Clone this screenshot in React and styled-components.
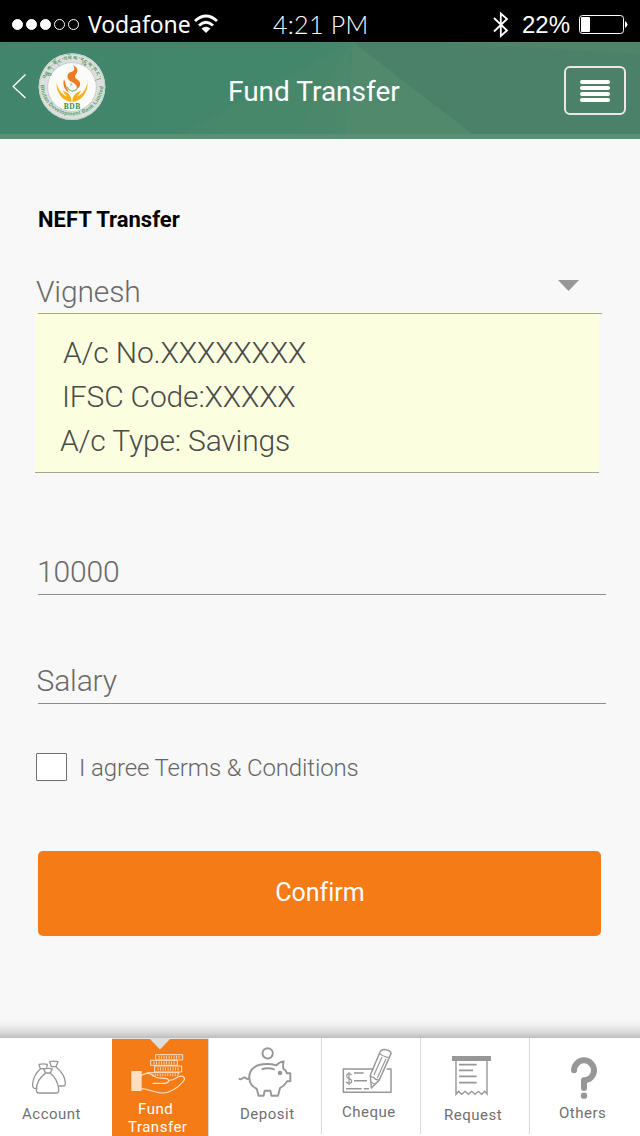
import React from "react";
import styled, { createGlobalStyle } from "styled-components";

const GlobalStyle = createGlobalStyle`
  * { box-sizing: border-box; }
  body { margin: 0; background: #f8f8f8; }
`;

const Screen = styled.div`
  width: 640px;
  height: 1136px;
  display: flex;
  flex-direction: column;
  background: #f8f8f8;
  font-family: Roboto, "Noto Sans", sans-serif;
  font-variant-ligatures: none;
  overflow: hidden;
`;

/* ---------- status bar ---------- */

const StatusBar = styled.div`
  height: 42px;
  flex: none;
  display: flex;
  align-items: flex-start;
  background: #000;
  color: #fff;
  padding-left: 12px;
`;

const SignalDots = styled.div`
  display: flex;
  gap: 3px;
  margin-top: 19px;
`;

const Dot = styled.span`
  width: 11px;
  height: 11px;
  border-radius: 50%;
  border: 1px solid #fff;
  background: ${(p) => (p.$on ? "#fff" : "transparent")};
`;

const StatusText = styled.span`
  font-family: ${(p) => p.$font}, sans-serif;
  font-size: ${(p) => p.$size}px;
  font-weight: ${(p) => p.$weight || 400};
  line-height: 30px;
  letter-spacing: ${(p) => p.$track || 0}px;
  margin-top: ${(p) => p.$top}px;
  margin-left: ${(p) => p.$gap}px;
  width: ${(p) => p.$width}px;
  white-space: nowrap;
`;

const StatusIcon = styled.svg`
  display: block;
  flex: none;
  margin-top: ${(p) => p.$top}px;
  margin-left: ${(p) => p.$gap || 0}px;
`;

/* ---------- header ---------- */

const Header = styled.header`
  position: relative;
  height: 97px;
  flex: none;
  display: flex;
  align-items: flex-start;
  padding-left: 12px;
  color: #fff;
`;

const HeaderPattern = styled.svg`
  position: absolute;
  inset: 0;
`;

const BackButton = styled.button`
  position: relative;
  margin: 31px 0 0;
  padding: 0;
  border: 0;
  background: none;
  display: flex;
`;

const LogoMark = styled.svg`
  position: relative;
  display: block;
  margin: 11px 0 0 11px;
`;

const Title = styled.h1`
  position: relative;
  margin: 33px 0 0 122px;
  width: 336px;
  font-size: 28px;
  font-weight: 400;
  line-height: 34px;
`;

const MenuButton = styled.button`
  position: relative;
  margin: 24px 0 0;
  width: 62px;
  height: 49px;
  padding: 0;
  border: 2px solid #ebe6e7;
  border-radius: 6px;
  background: none;
  display: flex;
  flex-direction: column;
  align-items: center;
  justify-content: center;
  gap: 2px;
`;

const MenuBar = styled.span`
  width: 30px;
  height: 4px;
  border-radius: 2px;
  background: #fff;
`;

/* ---------- form ---------- */

const Form = styled.main`
  flex: 1;
  padding: 68px 0 0 35px;
  display: flex;
  flex-direction: column;
  align-items: flex-start;
`;

const SectionTitle = styled.h2`
  margin: 0 0 41px 3px;
  font-size: 22px;
  font-weight: 700;
  line-height: 26px;
  color: #000;
`;

const Field = styled.div`
  position: relative;
  z-index: 1;
  flex: none;
  width: ${(p) => p.$width}px;
  height: ${(p) => p.$height}px;
  margin: ${(p) => p.$top || 0}px 0 0 3px;
  border-bottom: 1px solid ${(p) => p.$line || "#8d8d8d"};
  display: flex;
  justify-content: space-between;
  font-size: 30px;
  font-weight: 300;
  line-height: 36px;
  letter-spacing: -0.15px;
  color: #6a6a6a;
  text-indent: ${(p) => p.$indent || 0}px;
`;

const Caret = styled.svg`
  margin: 6px 23px 0 0;
`;

const AccountBox = styled.div`
  flex: none;
  width: 564px;
  height: 161px;
  margin-top: -2px;
  padding-top: 19px;
  background: #fbffdf;
  border-bottom: 1px solid #a3a68c;
`;

const AccountLine = styled.div`
  padding-left: ${(p) => p.$left}px;
  font-size: 30px;
  font-weight: 300;
  line-height: 44px;
  letter-spacing: -0.17px;
  color: #4a4a4a;
`;

const TermsRow = styled.label`
  display: flex;
  align-items: center;
  height: 28px;
  margin: 49px 0 0 1px;
  font-size: 24px;
  font-weight: 300;
  line-height: 28px;
  letter-spacing: -0.13px;
  color: #666;
`;

const Checkbox = styled.span`
  width: 31px;
  height: 28px;
  margin-right: 12px;
  border: 1px solid #6f6f6f;
  border-radius: 1px;
  background: #fff;
`;

const TermsText = styled.span`
  padding-top: 1px;
`;

const ConfirmButton = styled.button`
  flex: none;
  width: 563px;
  height: 85px;
  margin: 70px 0 0 3px;
  padding: 0 0 1px 1px;
  border: 0;
  border-radius: 5px;
  background: #f57b17;
  color: #fff;
  font: 400 25px/30px Roboto, sans-serif;
  font-variant-ligatures: none;
`;

/* ---------- bottom tabs ---------- */

const TabShadow = styled.div`
  height: 18px;
  flex: none;
  background: linear-gradient(#f8f8f8, #ececec 35%, #d8d8d8 70%, #bdbdbd);
`;

const TabBar = styled.nav`
  height: 98px;
  flex: none;
  display: flex;
  background: #fff;
`;

const Tab = styled.a`
  position: relative;
  flex: none;
  width: ${(p) => p.$width}px;
  height: ${(p) => (p.$active ? 98 : 96)}px;
  padding-top: ${(p) => p.$top}px;
  border-right: ${(p) => (p.$divider ? "1px solid #d9d9d9" : "0")};
  border-top: ${(p) => (p.$active ? "1px solid #e4e4e4" : "0")};
  background: ${(p) => (p.$active ? "#f57b17" : "#fff")};
  color: ${(p) => (p.$active ? "#fff" : "#707070")};
`;

const TabIcon = styled.svg`
  display: block;
  margin-left: ${(p) => p.$left}px;
  fill: none;
  stroke: ${(p) => p.$color || "#979797"};
`;

const TabLabel = styled.div`
  margin: ${(p) => p.$gap}px 0 0 ${(p) => p.$left}px;
  font-size: 15px;
  letter-spacing: 0.5px;
  line-height: 18px;
  white-space: nowrap;
`;

const ActiveNotch = styled.svg`
  position: absolute;
  left: 37px;
  top: -1px;
`;

function Logo() {
  return (
    <LogoMark width="68" height="68" viewBox="0 0 68 68">
      <defs>
        <path id="ringTop" d="M7.500 33.700 A26.500 26.500 0 0 1 60.500 33.700" />
        <path id="ringBottom" d="M2.600 31 A31.400 31.400 0 0 0 65.400 31" />
      </defs>
      <circle cx="34" cy="33.7" r="33.4" fill="#dcdfde" />
      <circle cx="34" cy="33.7" r="32.8" fill="none" stroke="#bfd3c6" strokeWidth="1" />
      <circle cx="34" cy="34" r="24.4" fill="#fbfbf9" stroke="#c9cbd6" strokeWidth="1" />
      <text fontFamily="Noto Sans, sans-serif" fontSize="5.5" fontWeight="700" fill="#4d9b60">
        <textPath href="#ringTop" startOffset="50%" textAnchor="middle" textLength="68">
          འབྲུག་གོང་འཕེལ་དངུལ་ཁང་།
        </textPath>
      </text>
      <text fontFamily="Liberation Sans, sans-serif" fontSize="5.4" fontWeight="700" fill="#5aa36b">
        <textPath href="#ringBottom" startOffset="1" textLength="95">
          Bhutan Development Bank Limited
        </textPath>
      </text>
      <path d="M35 12 C41 15 40 19 37.5 22 C36 24 38 26 40 27 C44 30 42 35 38.5 36 C40 32 36 30 32 28 C28 25 29 20 33 19 C37 18 37 15 35 12Z" fill="#ee7b22" />
      <path d="M26 26 C24.500 31 26 37 31 39.500 C28.500 36 28 31 26 26Z" fill="#ee7b22" />
      <path d="M29 34 Q33 41 39 36" fill="none" stroke="#7dbb83" strokeWidth="1.200" />
      <path d="M33 29 L34.500 32 L32 33Z" fill="#a9cfae" />
      <path d="M18.500 29.500 C18 39 24 48 33.500 49 C34 42 29 39 24.500 37.500 C26 40 28 42 29 43.500 C23 41 20 36 18.500 29.500Z" fill="#f6ae1c" />
      <path d="M49.500 29.500 C50 39 44 48 34.500 49 C34 42 39 39 43.500 37.500 C42 40 40 42 39 43.500 C45 41 48 36 49.500 29.500Z" fill="#f6ae1c" />
      <text x="34.300" y="56" textAnchor="middle" fontFamily="Liberation Serif, serif" fontSize="7.500" fontWeight="700" letterSpacing="0.600" fill="#2f9150">BDB</text>
    </LogoMark>
  );
}

function AccountIcon() {
  return (
    <TabIcon $left={32} width="35" height="35" viewBox="96 121 105 105" strokeWidth="4" strokeLinejoin="round">
      <path d="M112 206 H103 Q97 205 98 192 Q101 165 121 148 L117 134 Q130 131 142 134 L140 144" />
      <path d="M121 147 H132" />
      <path d="M154 141 L149 126 Q162 123 174 126 L168 141 M152 141 H170 M168 142 Q194 163 196 188 Q197 199 190 199 H175" />
      <path d="M136 159 L131 148 Q144 144 157 148 L151 159 M133 160 H154 M136 161 Q109 180 109 211 Q109 220 116 220 H169 Q177 220 176 209 Q173 178 151 161" />
    </TabIcon>
  );
}

function FundIcon() {
  return (
    <TabIcon $left={19} $color="#fde0c4" width="55" height="42" viewBox="392 102 165 126" strokeWidth="3.500" strokeLinejoin="round" strokeLinecap="round">
      <rect x="393" y="156" width="31" height="60" fill="#fde0c4" stroke="none" />
      <rect x="467" y="107" width="80" height="16" strokeWidth="3" />
      <rect x="452" y="124" width="79" height="15" strokeWidth="3" />
      <rect x="464" y="141" width="80" height="18" strokeWidth="3" />
      <path d="M440 161 H536 L531 171" strokeWidth="3" />
      <path d="M475 115 H541 M460 132 H524 M472 150 H538" strokeWidth="9" strokeDasharray="2.500 5" strokeLinecap="butt" />
      <path d="M456 168 H526" strokeWidth="8" strokeDasharray="2.500 5" strokeLinecap="butt" />
      <path d="M424 169 C438 160 450 162 460 171 C466 176 478 178 494 178 Q506 179 505 186 Q503 193 492 193 H458 M505 184 Q518 184 528 177 Q540 168 550 174 Q556 179 548 188 C530 209 510 221 488 222 C466 223 450 211 424 209" />
    </TabIcon>
  );
}

function PiggyIcon() {
  return (
    <TabIcon $left={29} width="54" height="50" viewBox="98 79 162 150" strokeWidth="5.800" strokeLinejoin="round">
      <circle cx="187" cy="98" r="15.500" />
      <path d="M101 173 Q105 178 110 174 Q117 167 123 173 Q127 177 132 172" />
      <path d="M132 172 C130 144 154 130 184 130 Q202 130 213 134 Q221 124 235 122 Q232 134 234 144 Q242 149 245 158 H255 V182 H245 Q238 195 224 202 L218 225 H198 L195 210 H178 L175 225 H160 L154 204 Q133 195 132 172Z" />
      <path d="M169 146 Q188 139 208 147" />
      <circle cx="224" cy="157" r="7" fill="#979797" stroke="none" />
    </TabIcon>
  );
}

function ChequeIcon() {
  return (
    <TabIcon $left={20} width="51" height="46" viewBox="412 84 153 138" strokeWidth="4.400" strokeLinejoin="round">
      <path d="M507 147 H416 V217 H559 V147 H546" />
      <path d="M441 165 Q438 161 433 161 Q426 161 426 168 Q426 174 433 176 Q441 178 441 184 Q441 190 433 190 Q427 190 424 185 M433 156 V195" strokeWidth="3.500" />
      <path d="M448 159 H477 M448 182 H487 M424 206 H471 M477 206 H493" />
      <path d="M497 165 L526 96 Q530 87 543 89 Q560 92 559 101 L524 180 L500 204Z" />
      <path d="M497 165 Q501 174 507 172 Q512 180 524 180 M524 99 Q531 108 552 113 M532 111 L508 165 M544 116 L518 174 M498 186 L511 193" strokeWidth="3.500" />
    </TabIcon>
  );
}

function RequestIcon() {
  return (
    <TabIcon $left={31} width="39" height="40" viewBox="111 107 117 120" strokeWidth="4.200">
      <rect x="111" y="107" width="117" height="15" fill="#979797" stroke="none" />
      <path d="M123 120 V222 L131 213 L140 222 L150 213 L160 222 L170 213 L180 222 L190 213 L200 222 L209 213 L216 221 V120" />
      <path d="M132 133 H185 M132 150 H174 M132 168 H185 M132 187 H185" strokeWidth="5" />
    </TabIcon>
  );
}

function QuestionIcon() {
  return (
    <TabIcon $left={41} width="27" height="42" viewBox="468 110 81 126">
      <path d="M477 150 A30 30 0 1 1 507 180 V203" strokeWidth="18" strokeLinecap="round" strokeLinejoin="round" />
      <circle cx="507" cy="226" r="9.500" fill="#979797" stroke="none" />
    </TabIcon>
  );
}

export default function App() {
  return (
    <Screen>
      <GlobalStyle />
      <StatusBar>
        <SignalDots>
          <Dot $on /><Dot $on /><Dot $on /><Dot /><Dot />
        </SignalDots>
        <StatusText $font='"Noto Sans"' $size={23} $track={-0.1} $top={9} $gap={9} $width={105}>Vodafone</StatusText>
        <StatusIcon $top={14} width="26" height="20" viewBox="0 0 26 20">
          <path d="M2 7 Q13 -3 24 7 M6 11.500 Q13 5 20 11.500" fill="none" stroke="#fff" strokeWidth="2.800" />
          <path d="M8.500 14.500 Q13 11 17.500 14.500 L13 19Z" fill="#fff" />
        </StatusIcon>
        <StatusText $font="Lato" $size={25} $weight={300} $track={0.3} $top={9} $gap={54} $width={219}>4:21 PM</StatusText>
        <StatusIcon $top={11} width="18" height="28" viewBox="0 0 18 28">
          <path d="M2 7 L15 19.500 L8.800 25 V2.500 L15 8 L2 20.500" fill="none" stroke="#fff" strokeWidth="1.800" />
        </StatusIcon>
        <StatusText $font='"Liberation Sans"' $size={24} $top={10} $gap={12} $width={57}>22%</StatusText>
        <StatusIcon $top={15} width="50" height="19" viewBox="0 0 50 19">
          <rect x="0.500" y="0.500" width="44" height="18" rx="3" fill="none" stroke="#fff" />
          <rect x="2" y="2" width="9" height="15" rx="1" fill="#fff" />
          <path d="M46 6 Q51 9.500 46 13Z" fill="#fff" />
        </StatusIcon>
      </StatusBar>

      <Header>
        <HeaderPattern width="640" height="97" viewBox="0 0 640 97">
          <defs>
            <linearGradient id="green" x1="0" x2="1" y1="0" y2="0">
              <stop offset="0" stopColor="#41866c" />
              <stop offset="0.480" stopColor="#42866b" />
              <stop offset="0.550" stopColor="#48876b" />
              <stop offset="1" stopColor="#4b8167" />
            </linearGradient>
          </defs>
          <rect width="640" height="97" fill="url(#green)" />
          <path d="M170 97 L352 0 L346 97Z" fill="#4b876a" opacity="0.500" />
          <path d="M292 97 L352 0 L346 97Z" fill="#4e886b" opacity="0.550" />
          <path d="M345 97 L353 0 L479 97Z" fill="#50896b" />
          <path d="M353 0 H640 V97 H479Z" fill="#4b8168" />
          <path d="M440 0 H640 V12Z" fill="#508469" />
          <rect y="92" width="640" height="5" fill="#579074" />
        </HeaderPattern>
        <BackButton aria-label="Back">
          <svg width="15" height="26" viewBox="0 0 15 26">
            <path d="M13.500 1.500 L1.200 13.500 L13.500 25" fill="none" stroke="#fff" strokeWidth="1.400" />
          </svg>
        </BackButton>
        <Logo />
        <Title>Fund Transfer</Title>
        <MenuButton aria-label="Menu">
          <MenuBar /><MenuBar /><MenuBar /><MenuBar />
        </MenuButton>
      </Header>

      <Form>
        <SectionTitle>NEFT Transfer</SectionTitle>
        <Field $width={564} $height={40} $line="#a3a68c" $indent={-2}>
          <span>Vignesh</span>
          <Caret width="21" height="11" viewBox="0 0 21 11">
            <path d="M0 0 H21 L10.500 11Z" fill="#979797" />
          </Caret>
        </Field>
        <AccountBox>
          <AccountLine $left={28}>A/c No.XXXXXXXX</AccountLine>
          <AccountLine $left={27}>IFSC Code:XXXXX</AccountLine>
          <AccountLine $left={25}>A/c Type: Savings</AccountLine>
        </AccountBox>
        <Field $width={568} $height={41} $top={81} $indent={-1}>10000</Field>
        <Field $width={568} $height={41} $top={68} $indent={-1.5}>Salary</Field>
        <TermsRow>
          <Checkbox />
          <TermsText>I agree Terms &amp; Conditions</TermsText>
        </TermsRow>
        <ConfirmButton>Confirm</ConfirmButton>
      </Form>

      <TabShadow />
      <TabBar>
        <Tab $width={112} $top={22}>
          <AccountIcon />
          <TabLabel $gap={10} $left={22}>Account</TabLabel>
        </Tab>
        <Tab $width={97} $top={14} $active $divider>
          <ActiveNotch width="22" height="12" viewBox="0 0 22 12">
            <path d="M0 0 H22 L11 11.500Z" fill="#dedede" />
          </ActiveNotch>
          <FundIcon />
          <TabLabel $gap={5} $left={26}>Fund</TabLabel>
          <TabLabel $gap={0} $left={16}>Transfer</TabLabel>
        </Tab>
        <Tab $width={113} $top={9} $divider>
          <PiggyIcon />
          <TabLabel $gap={8} $left={31}>Deposit</TabLabel>
        </Tab>
        <Tab $width={99} $top={10} $divider>
          <ChequeIcon />
          <TabLabel $gap={9} $left={20}>Cheque</TabLabel>
        </Tab>
        <Tab $width={109} $top={18} $divider>
          <RequestIcon />
          <TabLabel $gap={10} $left={23}>Request</TabLabel>
        </Tab>
        <Tab $width={110} $top={19}>
          <QuestionIcon />
          <TabLabel $gap={5} $left={29}>Others</TabLabel>
        </Tab>
      </TabBar>
    </Screen>
  );
}
